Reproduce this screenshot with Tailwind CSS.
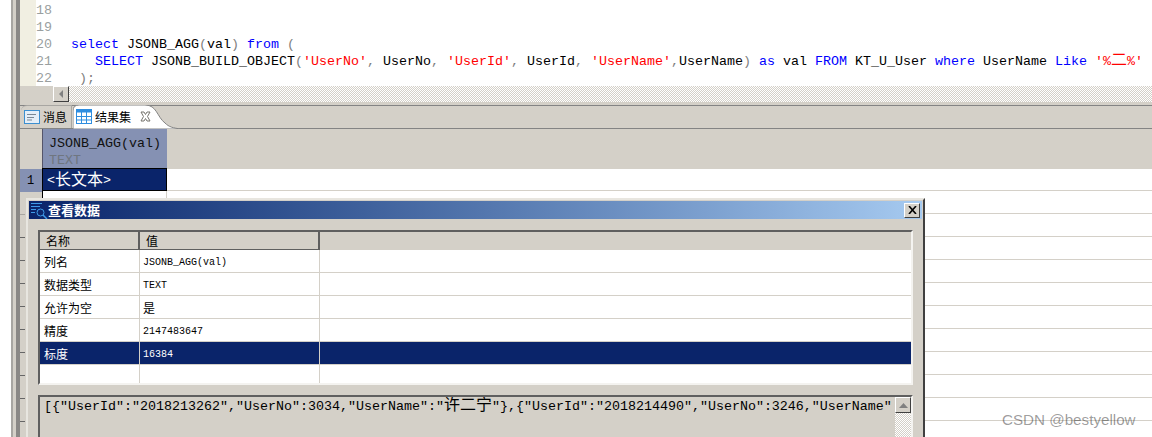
<!DOCTYPE html>
<html lang="zh">
<head>
  <meta charset="UTF-8" />
  <title>查看数据</title>
  <script src="https://cdn.jsdelivr.net/npm/@tailwindcss/browser@4"></script>
</head>
<body class="relative w-[1152px] h-[437px] overflow-hidden bg-white flex font-['Liberation_Mono','Noto_Sans_CJK_SC',monospace] text-[13.33px] text-black">

  <!-- left edge of the window -->
  <div class="w-[20px] h-full flex shrink-0">
    <div class="w-[11px] bg-white"></div>
    <div class="w-[2px] bg-[#a8a6a2]"></div>
    <div class="w-[3px] bg-[#d4d0c8]"></div>
    <div class="w-[4px] bg-[#8a8886]"></div>
  </div>

  <div class="flex-1 min-w-0 flex flex-col">
    <!-- editor -->
    <div class="h-[86px] flex overflow-hidden">
      <div class="w-[16px] bg-[#f1efe2]"></div>
      <div class="w-[19px] pt-[2px] text-[#9a9f9f] leading-[17px]">
        <div>18</div><div>19</div><div>20</div><div>21</div><div>22</div>
      </div>
      <pre class="pt-[2px] leading-[17px] font-['Liberation_Mono','Noto_Sans_CJK_SC',monospace] whitespace-pre"><div>&nbsp;</div><div>&nbsp;</div><div>  <span class="text-[#0000ff]">select</span> JSONB_AGG<span class="text-[#808080]">(</span>val<span class="text-[#808080]">)</span> <span class="text-[#0000ff]">from</span> <span class="text-[#808080]">(</span></div><div>     <span class="text-[#0000ff]">SELECT</span> JSONB_BUILD_OBJECT<span class="text-[#808080]">(</span><span class="text-[#ff0000]">'UserNo'</span><span class="text-[#808080]">,</span> UserNo<span class="text-[#808080]">,</span> <span class="text-[#ff0000]">'UserId'</span><span class="text-[#808080]">,</span> UserId<span class="text-[#808080]">,</span> <span class="text-[#ff0000]">'UserName'</span><span class="text-[#808080]">,</span>UserName<span class="text-[#808080]">)</span> <span class="text-[#0000ff]">as</span> val <span class="text-[#0000ff]">FROM</span> KT_U_User <span class="text-[#0000ff]">where</span> UserName <span class="text-[#0000ff]">Like</span> <span class="text-[#ff0000]">'%<span class="text-[16px] leading-[17px]">二</span>%'</span></div><div>   <span class="text-[#808080]">);</span></div></pre>
    </div>

    <!-- editor horizontal scrollbar -->
    <div class="h-[16px] flex bg-[repeating-conic-gradient(#d4d0c8_0_25%,#ffffff_0_50%)] bg-[length:2px_2px]">
      <div class="w-[33px] bg-[#d4d0c8]"></div>
      <div class="w-[16px] h-[16px] bg-[#d4d0c8] border border-t-white border-l-white border-r-[#404040] border-b-[#404040] flex items-center justify-center">
        <svg width="5" height="8" viewBox="0 0 5 8"><path d="M4 0V8L0 4Z" fill="#808080"/></svg>
      </div>
    </div>

    <!-- tab strip -->
    <div class="relative h-[27px] bg-[#d4d0c8] border-b border-[#848484] text-[12px] font-['Noto_Sans_CJK_SC',sans-serif] flex">
      <div class="absolute left-0 right-0 top-[3px] h-px bg-[#848484]"></div>
      <div class="relative mt-[3px] ml-[1px] w-[51px] h-[23px] flex items-center gap-[3px] pl-[3px] border-r border-[#a8a6a2] rounded-tl-[6px] border-t border-[#848484]">
        <svg width="16" height="14" viewBox="0 0 16 14"><rect x=".5" y=".5" width="15" height="13" fill="#e4eef8" stroke="#3c8fd0"/><path d="M3 4.5H12M3 7.5H10M3 10H8" stroke="#7b8794"/></svg>
        <span>消息</span>
      </div>
      <svg class="absolute left-[53px] top-[3px]" width="110" height="24" viewBox="0 0 110 24"><path d="M0 24V6Q0 0 6 0H72C84 0 84 12 92 18C96 22 100 23 108 24Z" fill="#fff" stroke="#848484"/></svg>
      <div class="relative mt-[3px] h-[23px] flex items-center pl-[4px]">
        <svg width="16" height="15" viewBox="0 0 16 15"><rect x=".5" y=".5" width="15" height="14" fill="#fff" stroke="#2f8ee0"/><rect x=".5" y=".5" width="15" height="3" fill="#2f8ee0"/><path d="M5.5 1V14M10.5 1V14M1 7.5H15M1 11H15" stroke="#2f8ee0"/></svg>
        <span class="ml-[3px]">结果集</span>
        <svg class="ml-[9px]" width="11" height="11" viewBox="0 0 11 11"><path d="M1 1L4 1L5.5 3.5L7 1L10 1L7.5 5.5L10 10L7 10L5.5 7.5L4 10L1 10L3.5 5.5Z" fill="#fff" stroke="#77756f"/></svg>
      </div>
    </div>

    <!-- result grid -->
    <div class="flex-1 flex">
      <div class="w-[22px] bg-[#d4d0c8] shrink-0 flex flex-col">
        <div class="h-[40px]"></div>
        <div class="h-[23px] bg-[#8591b3] flex items-center pl-[7px] text-[12px]">1</div>
        <div class="h-[23px] border-b border-[#a8a6a2] w-[5px]"></div>
        <div class="h-[23px] border-b border-[#666] w-[5px]"></div>
        <div class="h-[23px] border-b border-[#666] w-[5px]"></div>
        <div class="h-[23px] border-b border-[#666] w-[5px]"></div>
        <div class="h-[23px] border-b border-[#666] w-[5px]"></div>
        <div class="h-[23px] border-b border-[#666] w-[5px]"></div>
        <div class="h-[23px] border-b border-[#666] w-[5px]"></div>
        <div class="h-[23px] border-b border-[#666] w-[5px]"></div>
        <div class="h-[23px] border-b border-[#666] w-[5px]"></div>
        <div class="h-[23px] border-b border-[#666] w-[5px]"></div>
      </div>
      <div class="flex-1 flex flex-col">
        <div class="h-[40px] bg-[#d4d0c8]">
          <div class="w-[125px] h-[39px] bg-[#8591b3] border-l border-[#55556a] pl-[6px] pt-[6px] leading-[17px]">
            <div class="text-[#111]">JSONB_AGG<span>(val)</span></div>
            <div class="text-[#6f7680]">TEXT</div>
          </div>
        </div>
        <div class="h-[23px] -mt-px border-b border-[#d4d0c8] flex">
          <div class="w-[125px] h-[23px] bg-[#0a246a] border-y border-x border-black text-white pl-[4px] pt-[2px] flex items-center font-['Liberation_Mono','Noto_Sans_CJK_SC',monospace]">&lt;<span class="text-[16px]">长文本</span>&gt;</div>
        </div>
        <div class="h-[23px] border-b border-[#d4d0c8] flex"><div class="w-[125px] h-[22px] border-l border-black border-r-[#d4d0c8] border-r"></div></div>
        <div class="h-[23px] border-b border-[#d4d0c8]"></div>
        <div class="h-[23px] border-b border-[#d4d0c8]"></div>
        <div class="h-[23px] border-b border-[#d4d0c8]"></div>
        <div class="h-[23px] border-b border-[#d4d0c8]"></div>
        <div class="h-[23px] border-b border-[#d4d0c8]"></div>
        <div class="h-[23px] border-b border-[#d4d0c8]"></div>
        <div class="h-[23px] border-b border-[#d4d0c8]"></div>
        <div class="h-[23px] border-b border-[#d4d0c8]"></div>
        <div class="h-[23px] border-b border-[#d4d0c8]"></div>
      </div>
    </div>
  </div>

  <!-- data viewer dialog -->
  <div class="absolute left-[26px] top-[198px] w-[899px] h-[260px] bg-[#d4d0c8] border-2 border-t-[#e8e6e0] border-l-[#e8e6e0] border-r-[#404040] border-b-[#404040] p-px flex flex-col">
    <div class="h-[18px] shrink-0 bg-gradient-to-r from-[#0a246a] to-[#a6caf0] flex items-center pl-[2px] pr-[2px] text-white">
      <svg width="17" height="17" viewBox="0 0 17 17" fill="none" stroke="#3f9be8"><path d="M0 1.5H11M0 4.5H9M0 7.5H5M0 10.5H4"/><circle cx="9.5" cy="10.5" r="3.5"/><path d="M12 13L16 17" stroke-width="1.5"/></svg>
      <span class="font-bold text-[13px] font-['Noto_Sans_CJK_SC',sans-serif]">查看数据</span>
      <div class="ml-auto w-[16px] h-[15px] bg-[#d4d0c8] border border-t-white border-l-white border-r-[#404040] border-b-[#404040] flex items-center justify-center">
        <svg width="9" height="8" viewBox="0 0 9 8"><path d="M1 0L8 8M8 0L1 8" stroke="#000" stroke-width="1.6"/></svg>
      </div>
    </div>

    <div class="mt-[11px] mx-[9px] h-[155px] shrink-0 bg-white border-2 border-t-[#5f5f5f] border-l-[#5f5f5f] border-r-[#f4f3f0] border-b-[#f4f3f0] text-[10px]">
      <div class="h-[18px] bg-[#d4d0c8] grid grid-cols-[100px_180px_1fr] text-[12px] font-['Noto_Sans_CJK_SC',sans-serif]">
        <div class="border-r-2 border-b border-r-[#5f5f5f] border-b-[#5f5f5f] pl-[6px] leading-[17px]">名称</div>
        <div class="border-r-2 border-b border-r-[#5f5f5f] border-b-[#5f5f5f] pl-[6px] leading-[17px]">值</div>
        <div></div>
      </div>
      <div class="h-[23px] grid grid-cols-[100px_180px_1fr] border-b border-[#d4d0c8] items-center">
        <div class="h-full border-r border-[#d4d0c8] pl-[4px] pt-[2px] flex items-center text-[12px] font-['Noto_Sans_CJK_SC',sans-serif]">列名</div>
        <div class="h-full border-r border-[#d4d0c8] pl-[3px] pt-[2px] flex items-center">JSONB_AGG(val)</div><div></div>
      </div>
      <div class="h-[23px] grid grid-cols-[100px_180px_1fr] border-b border-[#d4d0c8] items-center">
        <div class="h-full border-r border-[#d4d0c8] pl-[4px] pt-[2px] flex items-center text-[12px] font-['Noto_Sans_CJK_SC',sans-serif]">数据类型</div>
        <div class="h-full border-r border-[#d4d0c8] pl-[3px] pt-[2px] flex items-center">TEXT</div><div></div>
      </div>
      <div class="h-[23px] grid grid-cols-[100px_180px_1fr] border-b border-[#d4d0c8] items-center">
        <div class="h-full border-r border-[#d4d0c8] pl-[4px] pt-[2px] flex items-center text-[12px] font-['Noto_Sans_CJK_SC',sans-serif]">允许为空</div>
        <div class="h-full border-r border-[#d4d0c8] pl-[3px] pt-[2px] flex items-center text-[12px] font-['Noto_Sans_CJK_SC',sans-serif]">是</div><div></div>
      </div>
      <div class="h-[23px] grid grid-cols-[100px_180px_1fr] border-b border-[#d4d0c8] items-center">
        <div class="h-full border-r border-[#d4d0c8] pl-[4px] pt-[2px] flex items-center text-[12px] font-['Noto_Sans_CJK_SC',sans-serif]">精度</div>
        <div class="h-full border-r border-[#d4d0c8] pl-[3px] pt-[2px] flex items-center">2147483647</div><div></div>
      </div>
      <div class="h-[23px] grid grid-cols-[100px_180px_1fr] bg-[#0a246a] text-white border-b border-[#d4d0c8] items-center">
        <div class="h-full border-r border-[#d4d0c8] pl-[4px] pt-[2px] flex items-center text-[12px] font-['Noto_Sans_CJK_SC',sans-serif]">标度</div>
        <div class="h-full border-r border-[#d4d0c8] pl-[3px] pt-[2px] flex items-center">16384</div><div></div>
      </div>
      <div class="h-[18px] grid grid-cols-[100px_180px_1fr]">
        <div class="border-r border-[#d4d0c8]"></div>
        <div class="border-r border-[#d4d0c8]"></div><div></div>
      </div>
    </div>

    <div class="relative mt-[10px] mx-[9px] flex-1 border-2 border-t-[#5f5f5f] border-l-[#5f5f5f] border-r-[#f4f3f0] overflow-hidden">
      <div class="pl-[4px] pt-[1px] leading-[17px] whitespace-pre">[{"UserId":"2018213262","UserNo":3034,"UserName":"<span class="text-[16px] leading-[17px]">许二宁</span>"},{"UserId":"2018214490","UserNo":3246,"UserName"</div>
      <div class="absolute right-0 top-0 bottom-0 w-[16px] bg-[repeating-conic-gradient(#d4d0c8_0_25%,#ffffff_0_50%)] bg-[length:2px_2px]">
        <div class="h-[16px] bg-[#d4d0c8] border border-t-white border-l-white border-r-[#404040] border-b-[#404040] flex items-center justify-center">
          <svg width="9" height="5" viewBox="0 0 9 5"><path d="M0 5H9L4.5 0Z" fill="#808080"/></svg>
        </div>
      </div>
    </div>
  </div>

  <!-- watermark -->
  <div class="absolute left-[1002px] top-[411px] text-[15.2px] leading-[18px] text-black/40 font-['Liberation_Sans',sans-serif] whitespace-nowrap">CSDN @bestyellow</div>
</body>
</html>
